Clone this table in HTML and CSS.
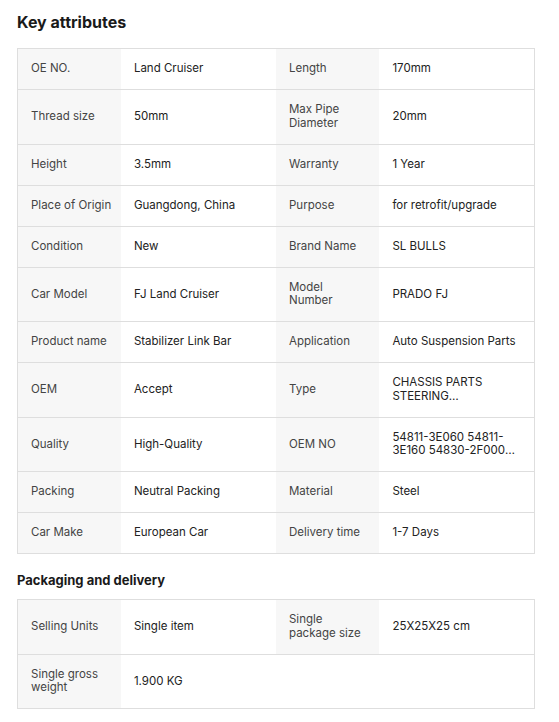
FILE: index.html
```html
<!DOCTYPE html>
<html>
<head>
<meta charset="utf-8">
<link rel="stylesheet" href="styles.css">
</head>
<body>
<div class="page">
  <h2 class="title">Key attributes</h2>
  <table class="attrs">
    <colgroup><col class="c-l"><col class="c-v"><col class="c-l"><col class="c-v"></colgroup>
    <tr><td class="k">OE NO.</td><td class="v">Land Cruiser</td><td class="k">Length</td><td class="v">170mm</td></tr>
    <tr><td class="k">Thread size</td><td class="v">50mm</td><td class="k">Max Pipe Diameter</td><td class="v">20mm</td></tr>
    <tr><td class="k">Height</td><td class="v">3.5mm</td><td class="k">Warranty</td><td class="v">1 Year</td></tr>
    <tr><td class="k">Place of Origin</td><td class="v">Guangdong, China</td><td class="k">Purpose</td><td class="v">for retrofit/upgrade</td></tr>
    <tr><td class="k">Condition</td><td class="v">New</td><td class="k">Brand Name</td><td class="v">SL BULLS</td></tr>
    <tr><td class="k">Car Model</td><td class="v">FJ Land Cruiser</td><td class="k">Model<br>Number</td><td class="v">PRADO FJ</td></tr>
    <tr><td class="k">Product name</td><td class="v">Stabilizer Link Bar</td><td class="k">Application</td><td class="v">Auto Suspension Parts</td></tr>
    <tr><td class="k">OEM</td><td class="v">Accept</td><td class="k">Type</td><td class="v"><span class="clamp">CHASSIS PARTS STEERING SUSPENSIONSYSTEM</span></td></tr>
    <tr><td class="k">Quality</td><td class="v">High-Quality</td><td class="k">OEM NO</td><td class="v"><span class="clamp">54811-3E060 54811-3E160 54830-2F000 54830-2F100</span></td></tr>
    <tr><td class="k">Packing</td><td class="v">Neutral Packing</td><td class="k">Material</td><td class="v">Steel</td></tr>
    <tr><td class="k">Car Make</td><td class="v">European Car</td><td class="k">Delivery time</td><td class="v">1-7 Days</td></tr>
  </table>
  <h3 class="subtitle">Packaging and delivery</h3>
  <table class="attrs">
    <colgroup><col class="c-l"><col class="c-v"><col class="c-l"><col class="c-v"></colgroup>
    <tr><td class="k">Selling Units</td><td class="v">Single item</td><td class="k">Single<br>package size</td><td class="v">25X25X25 cm</td></tr>
    <tr><td class="k">Single gross<br>weight</td><td class="v">1.900 KG</td><td class="e"></td><td class="e"></td></tr>
  </table>
</div>
</body>
</html>
```

FILE: styles.css
```css
html, body { margin: 0; padding: 0; background: #fff; }
body { font-family: Inter, "Noto Sans", sans-serif; color: #222; }
.page { padding: 12px 24px 0 17px; }
.title { margin: 0; font-size: 16px; font-weight: 700; line-height: 20px; color: #1a1a1a; }
.subtitle { margin: 18px 0 0; font-size: 13px; font-weight: 700; line-height: 16px; color: #1a1a1a; }
.attrs { margin-top: 16px; width: 518px; border-collapse: collapse; table-layout: fixed; }
.subtitle + .attrs { margin-top: 11px; }
.c-l { width: 20%; }
.c-v { width: 30%; }
.attrs td { border: 1px solid #dedede; padding: 13.25px 8px 13.25px 13px; font-size: 11.5px; line-height: 13.5px; vertical-align: middle; }
.attrs td.k { background: #f7f7f7; color: #444; border-left: none; border-right: none; }
.attrs td.k:first-child { border-left: 1px solid #dedede; }
.attrs td.v { background: #fff; color: #222; border-left: none; border-right: none; }
.attrs td:last-child { border-right: 1px solid #dedede; }
.attrs td.e { border-left: none; border-right: none; }
.attrs td.e:last-child { border-right: 1px solid #dedede; }
.clamp { display: -webkit-box; -webkit-line-clamp: 2; -webkit-box-orient: vertical; overflow: hidden; }
```
